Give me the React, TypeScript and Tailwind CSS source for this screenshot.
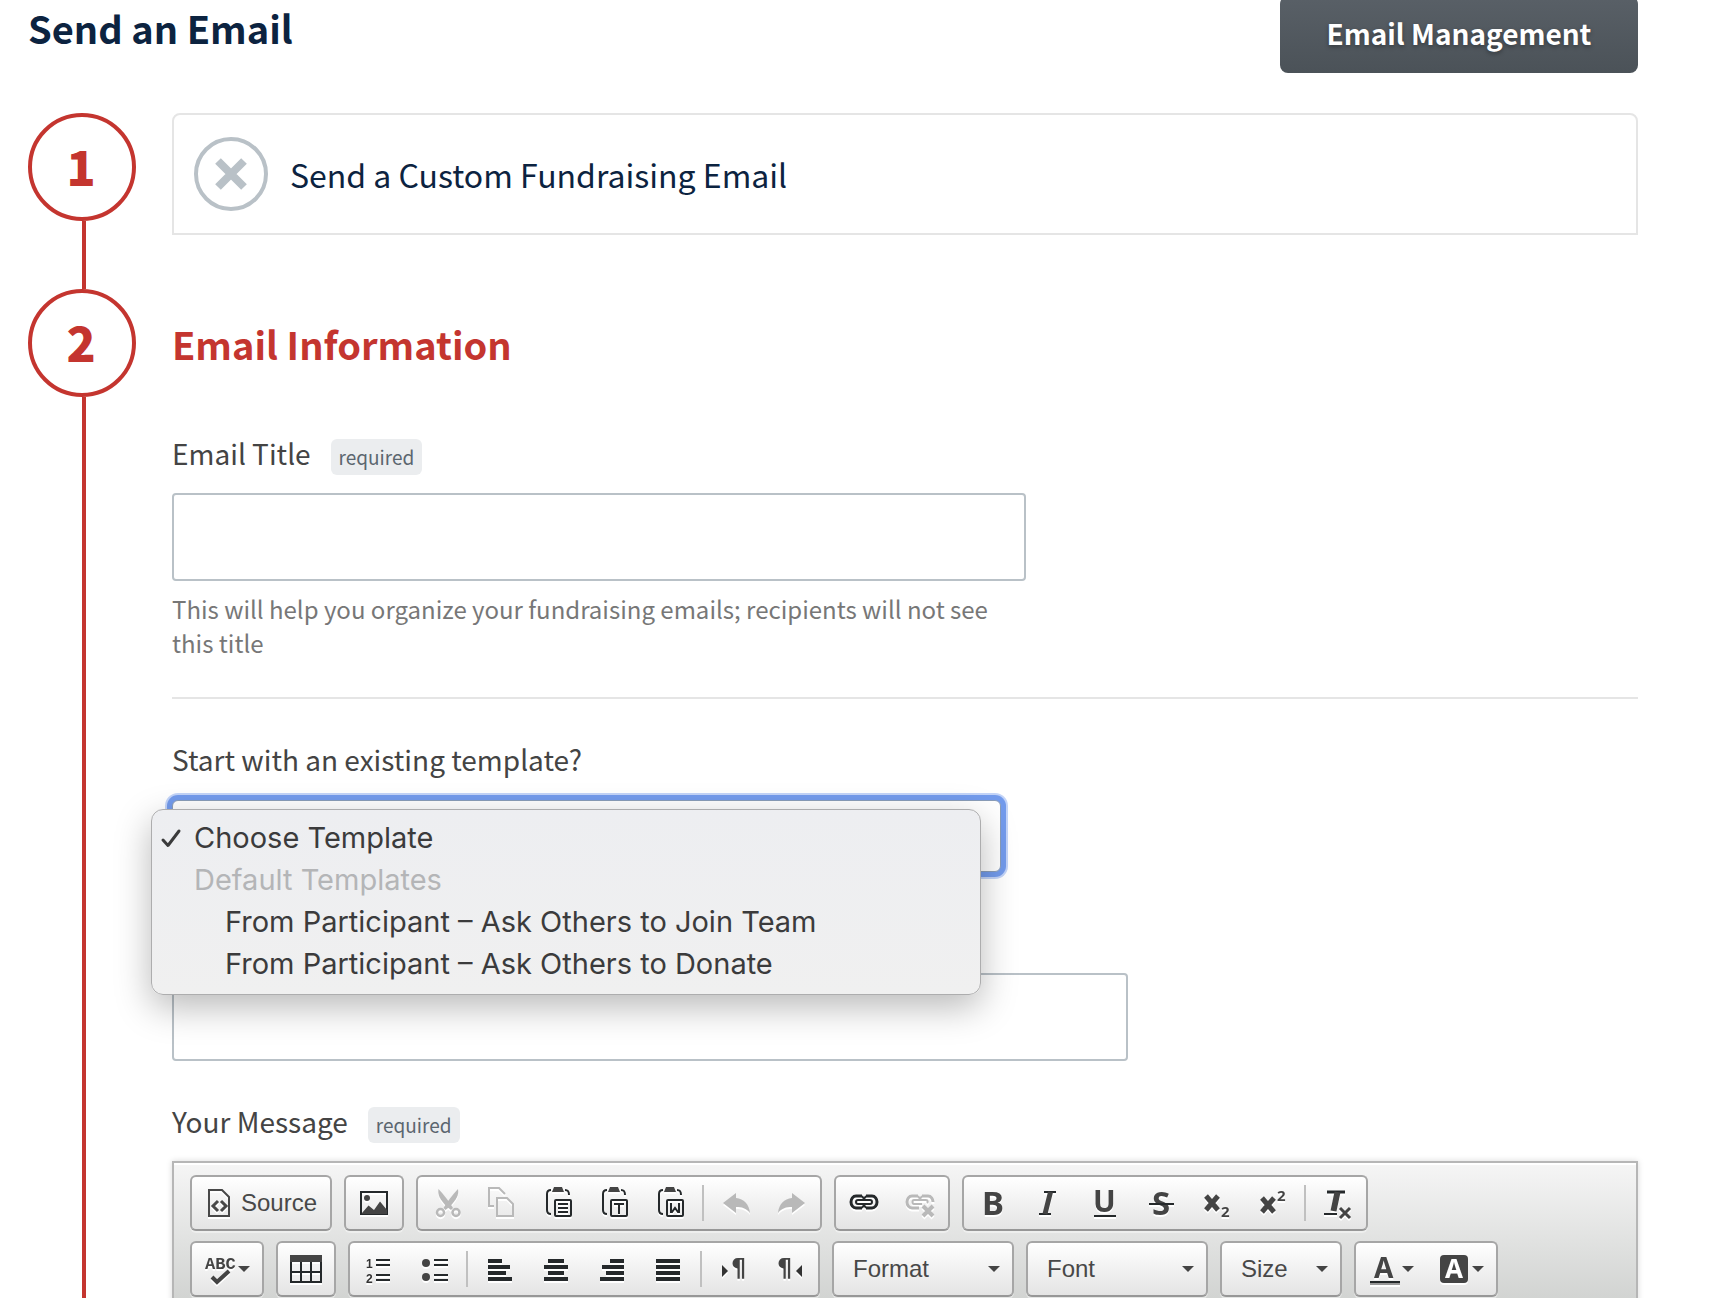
import { useState } from "react";
import type { ReactNode } from "react";

const templates = [
  "From Participant – Ask Others to Join Team",
  "From Participant – Ask Others to Donate",
];

function App() {
  return (
    <main className="h-screen overflow-hidden bg-white pl-7 pr-[78px] font-['Noto_Sans_CJK_SC',sans-serif] text-[#444]">
      <header className="flex items-start justify-between">
        <h1 className="text-[38px] font-bold leading-14 text-[#0c2340]">
          Send an Email
        </h1>
        <button className="-mt-1 h-[77px] w-[358px] rounded-lg bg-linear-to-b from-[#596067] to-[#4b5258] pb-1 text-[28px] font-bold text-white text-shadow-[0_2px_4px_rgb(0_0_0/0.35)]">
          Email Management
        </button>
      </header>

      <div className="mt-10">
        <Step number={1}>
          <div className="mb-[54px] flex h-[122px] items-center gap-[22px] rounded-t-lg border-2 border-[#e5e5e5] px-5">
            <button
              aria-label="Remove"
              className="flex size-[74px] items-center justify-center rounded-full border-4 border-[#b9c1c7]"
            >
              <svg width="36" height="36" viewBox="0 0 36 36" aria-hidden="true">
                <path d="M5 5L31 31M31 5L5 31" stroke="#b9c1c7" strokeWidth="8" />
              </svg>
            </button>
            <p className="text-[32px] leading-12 text-[#0c2340]">
              Send a Custom Fundraising Email
            </p>
          </div>
        </Step>

        <Step number={2}>
          <h2 className="flex h-[108px] items-center text-[38px] font-bold text-[#c4352f]">
            Email Information
          </h2>
          <div className="mt-[38px] border-b-2 border-[#e5e5e5] pb-[37px]">
            <FieldLabel htmlFor="title">Email Title</FieldLabel>
            <input
              id="title"
              type="text"
              className="mt-[18px] block h-[88px] w-full max-w-[854px] rounded border-2 border-[#b9c1c7] px-4 text-[28px]"
            />
            <p className="mt-[11px] max-w-[854px] text-[24px] leading-[34px] text-[#777]">
              This will help you organize your fundraising emails; recipients
              will not see this title
            </p>
          </div>

          <label
            htmlFor="template"
            className="mt-[42px] block text-[28px] leading-9"
          >
            Start with an existing template?
          </label>
          <TemplateSelect />

          <input
            type="text"
            aria-label="Subject"
            className="mt-[101px] block h-[88px] w-full max-w-[956px] rounded border-2 border-[#b9c1c7] px-4 text-[28px]"
          />

          <div className="mt-[42px] mb-[18px]">
            <FieldLabel htmlFor="message">Your Message</FieldLabel>
          </div>
          <Editor />
        </Step>
      </div>
    </main>
  );
}

// Numbered circle with the line that runs down to the next step
function Step({ number, children }: { number: number; children: ReactNode }) {
  return (
    <section className="flex gap-8">
      <div className="flex w-28 shrink-0 flex-col">
        <div className="flex size-[108px] shrink-0 items-center justify-center rounded-full border-4 border-[#c4352f] pr-[2px] pb-1 text-[48px] font-black text-[#c4352f]">
          {number}
        </div>
        <div className="mx-auto w-1 flex-1 bg-[#c4352f]" />
      </div>
      <div className="min-w-0 flex-1">{children}</div>
    </section>
  );
}

function FieldLabel({
  htmlFor,
  children,
}: {
  htmlFor: string;
  children: ReactNode;
}) {
  return (
    <label
      htmlFor={htmlFor}
      className="flex h-10 items-baseline gap-5 text-[28px] leading-9"
    >
      {children}
      <span className="rounded-md bg-[#ebedef] px-2 text-[19px] leading-9 text-[#5b666f]">
        required
      </span>
    </label>
  );
}

function TemplateSelect() {
  const [selected, setSelected] = useState("Choose Template");

  return (
    <div className="relative mt-[23px] max-w-[829px]">
      <select
        id="template"
        value={selected}
        onChange={(e) => setSelected(e.target.value)}
        className="block h-[72px] w-full appearance-none rounded-md border border-[#8a9db8] bg-white px-12 text-[24px] shadow-[0_0_0_5px_#739bec,0_0_0_7px_#c3d4f8] outline-none"
      >
        <option>Choose Template</option>
        <optgroup label="Default Templates">
          {templates.map((name) => (
            <option key={name}>{name}</option>
          ))}
        </optgroup>
      </select>

      <ul
        role="listbox"
        aria-label="Template"
        className="absolute top-[9px] right-5 -left-[21px] rounded-xl border border-[#adadae] bg-linear-to-b from-[#edeef1] to-[#f0f0f0] pt-[7px] pb-[9px] font-['Inter',sans-serif] text-[29px] leading-[42px] text-[#3b3b3c] shadow-[0_12px_36px_rgb(0_0_0/0.28)]"
      >
        <li
          role="option"
          aria-selected="true"
          className="flex items-center gap-3 pl-2"
        >
          <svg width="22" height="22" viewBox="0 0 22 22" fill="none" aria-hidden="true">
            <path
              d="M3 13L8 18.500L19 4"
              stroke="currentColor"
              strokeWidth="3"
              strokeLinecap="round"
              strokeLinejoin="round"
            />
          </svg>
          Choose Template
        </li>
        <li className="pl-[42px] text-[#b4b5b7]">Default Templates</li>
        {templates.map((name) => (
          <li
            key={name}
            role="option"
            aria-selected="false"
            className="pl-[73px]"
            onClick={() => setSelected(name)}
          >
            {name}
          </li>
        ))}
      </ul>
    </div>
  );
}

function Editor() {
  return (
    <div className="border-2 border-[#b6b6b6] shadow-[0_0_6px_rgb(0_0_0/0.15)]">
      <div className="flex flex-col gap-[10px] border-t-2 border-white bg-linear-to-b from-[#f5f5f5] to-[#cfd1cf] px-4 pt-[10px] pb-3">
        <div className="flex gap-3">
          <Group>
            <button className="flex h-[52px] w-[138px] items-center gap-[5px] pl-3 font-['Liberation_Sans',sans-serif] text-[24px] text-[#484848]">
              <Icon>
                <path d="M5 3H18L25 10V29H5Z" />
                <path d="M14 14L9 19L14 24M17 14L22 19L17 24" strokeWidth="3" />
              </Icon>
              Source
            </button>
          </Group>
          <Group>
            <Tool label="Image">
              <rect x="3" y="5" width="26" height="22" />
              <circle cx="9" cy="11" r="3" fill="#444" stroke="none" />
              <path d="M4 26L10.500 18.500L16 23L22 14.500L29 23V27H4Z" fill="#444" stroke="none" />
            </Tool>
          </Group>
          <Group>
            <Tool label="Cut" disabled>
              <path d="M8.500 2C7.500 8 10 12 16 19L21 23L23 21C19 14 14 8 8.500 2Z" fill="currentColor" stroke="none" />
              <path d="M28 2C29 8 26.500 12 20.500 19L15.500 23L13.500 21C17.500 14 22.500 8 28 2Z" fill="currentColor" stroke="none" />
              <circle cx="10.500" cy="25.500" r="3.500" strokeWidth="2.500" />
              <circle cx="26" cy="25.500" r="3.500" strokeWidth="2.500" />
            </Tool>
            <Tool label="Copy" disabled>
              <path d="M8 19H3V1H13L19 7" />
              <path d="M11 11H21L27 17V29H11Z" />
            </Tool>
            <Tool label="Paste">
              <Clipboard />
              <path d="M16 17H26M16 21H26M16 25H26" />
            </Tool>
            <Tool label="Paste as plain text">
              <Clipboard />
              <path d="M16 17H26M21 17V27" />
            </Tool>
            <Tool label="Paste from Word">
              <Clipboard />
              <path d="M17 16V25H18L21 21L24 25H25V16" />
            </Tool>
            <Separator />
            <Tool label="Undo" disabled>
              <path d="M3 16L16 6V11C24 12 29 17 30 26C26 21 22 20 16 20V26Z" fill="currentColor" stroke="none" />
            </Tool>
            <Tool label="Redo" disabled>
              <path d="M29 16L16 6V11C8 12 3 17 2 26C6 21 10 20 16 20V26Z" fill="currentColor" stroke="none" />
            </Tool>
          </Group>
          <Group>
            <Tool label="Link">
              <Chain />
            </Tool>
            <Tool label="Unlink" disabled>
              <path d="M14 9H8C5 9 3 12 3 15C3 18 5 21 8 21H15M18 9H24C27 9 29 12 29 15" strokeWidth="3" />
              <path d="M14 9L16 12L18 9M18 17H10C8 17 8 13 10 13H22C24 13 24 15 23 16" />
              <path d="M19 19L29 29M29 19L19 29" strokeWidth="4" />
            </Tool>
          </Group>
          <Group>
            <Tool label="Bold">
              <Glyph x={6} y={28} className="text-[33px]">B</Glyph>
            </Tool>
            <Tool label="Italic">
              <path d="M12 5H24M7 27H19" />
              <path d="M18.500 5L13 27" stroke="#444" strokeWidth="5" />
            </Tool>
            <Tool label="Underline">
              <Glyph x={5} y={25} className="text-[30px]">U</Glyph>
              <path d="M6 29H28" />
            </Tool>
            <Tool label="Strikethrough">
              <Glyph x={8} y={28} className="text-[33px]">S</Glyph>
              <path d="M5 17H30" />
            </Tool>
            <Tool label="Subscript">
              <path d="M6 9L18 23M18 9L6 23" stroke="#444" strokeWidth="5" />
              <Glyph x={21} y={30} className="text-[15px]">2</Glyph>
            </Tool>
            <Tool label="Superscript">
              <path d="M6 11L18 25M18 11L6 25" stroke="#444" strokeWidth="5" />
              <Glyph x={21} y={14} className="text-[15px]">2</Glyph>
            </Tool>
            <Separator />
            <Tool label="Remove format">
              <path d="M5 5H23" strokeWidth="3" />
              <path d="M15.500 5L11.500 24" stroke="#444" strokeWidth="6" />
              <path d="M2 27H15" />
              <path d="M18 21L28 31M28 21L18 31" stroke="#444" strokeWidth="3" />
            </Tool>
          </Group>
        </div>

        <div className="flex gap-3">
          <Group>
            <Tool label="Spell check" menu>
              <text x="1" y="16" fill="#444" stroke="none" className="font-['Liberation_Mono',monospace] text-[17px] font-bold">
                ABC
              </text>
              <path d="M8 24L13 29L25 18" stroke="#444" strokeWidth="4" />
            </Tool>
          </Group>
          <Group>
            <Tool label="Table">
              <rect x="1" y="3" width="30" height="26" />
              <path d="M0 2H32V9H0Z" fill="#444" stroke="none" />
              <path d="M11 9V30M21 9V30M1 19H31" />
            </Tool>
          </Group>
          <Group>
            <Tool label="Numbered list">
              <text x="4" y="15" fill="#333" stroke="none" className="font-['Liberation_Sans',sans-serif] text-[12px] font-bold">
                1
              </text>
              <text x="4" y="30" fill="#333" stroke="none" className="font-['Liberation_Sans',sans-serif] text-[12px] font-bold">
                2
              </text>
              <path d="M14 7H28M14 12H28M14 22H28M14 27H28" />
            </Tool>
            <Tool label="Bulleted list">
              <circle cx="8" cy="10" r="4" fill="#444" stroke="none" />
              <circle cx="8" cy="24" r="4" fill="#444" stroke="none" />
              <path d="M16 7H30M16 12H30M16 22H30M16 27H30" />
            </Tool>
            <Separator />
            <Tool label="Align left">
              <path d="M4 8H18M4 14H26M4 20H22M4 26H28" strokeWidth="4" />
            </Tool>
            <Tool label="Center">
              <path d="M8 8H24M4 14H28M8 20H24M4 26H28" strokeWidth="4" />
            </Tool>
            <Tool label="Align right">
              <path d="M14 8H28M6 14H28M10 20H28M4 26H28" strokeWidth="4" />
            </Tool>
            <Tool label="Justify">
              <path d="M4 8H28M4 14H28M4 20H28M4 26H28" strokeWidth="4" />
            </Tool>
            <Separator />
            <Tool label="Left to right">
              <path d="M4 12L10 18L4 24Z" fill="#333" stroke="none" />
              <Pilcrow x={13} />
            </Tool>
            <Tool label="Right to left">
              <Pilcrow x={3} />
              <path d="M28 12L22 18L28 24Z" fill="#333" stroke="none" />
            </Tool>
          </Group>
          <Combo label="Format" className="w-[178px]" />
          <Combo label="Font" className="w-[178px]" />
          <Combo label="Size" className="w-[118px]" />
          <Group>
            <Tool label="Text color" menu>
              <Glyph x={6} y={25} className="text-[28px]">A</Glyph>
              <path d="M2 29H32" />
              <path d="M2 31H32" stroke="#999" />
            </Tool>
            <Tool label="Background color" menu>
              <rect x="2" y="2" width="28" height="28" rx="4" fill="#444" stroke="none" />
              <text x="7" y="25" fill="#fff" stroke="none" className="font-['Noto_Sans',sans-serif] text-[26px] font-bold">
                A
              </text>
            </Tool>
          </Group>
        </div>
      </div>
      <textarea id="message" className="block h-80 w-full resize-none p-5" />
    </div>
  );
}

function Group({ children }: { children: ReactNode }) {
  return (
    <div className="flex items-center rounded-md border-2 border-[#a6a6a6] border-b-[#979797] bg-linear-to-b from-white to-[#e4e4e4] shadow-[0_2px_0_rgb(255_255_255/0.4)]">
      {children}
    </div>
  );
}

function Separator() {
  return <div className="mx-1 h-9 w-[2px] bg-[#c0c0c0]" />;
}

function Icon({ children }: { children: ReactNode }) {
  return (
    <svg
      width="32"
      height="32"
      viewBox="0 0 32 32"
      fill="none"
      stroke="currentColor"
      strokeWidth="2"
      className="shrink-0 overflow-visible drop-shadow-[0_2px_0_#fff]"
      aria-hidden="true"
    >
      {children}
    </svg>
  );
}

function Tool({
  label,
  disabled,
  menu,
  children,
}: {
  label: string;
  disabled?: boolean;
  menu?: boolean;
  children: ReactNode;
}) {
  return (
    <button
      aria-label={label}
      disabled={disabled}
      className="flex h-[52px] items-center gap-[2px] px-3 text-[#25292b] disabled:text-[#b9b9b9]"
    >
      <Icon>{children}</Icon>
      {menu && <Arrow />}
    </button>
  );
}

function Combo({ label, className }: { label: string; className: string }) {
  return (
    <Group>
      <button
        className={`flex h-[52px] items-center justify-between pr-3 pl-[19px] font-['Liberation_Sans',sans-serif] text-[24px] text-[#484848] ${className}`}
      >
        {label}
        <Arrow />
      </button>
    </Group>
  );
}

function Arrow() {
  return (
    <svg width="12" height="6" viewBox="0 0 12 6" aria-hidden="true">
      <path d="M0 0H12L6 6Z" fill="#444" />
    </svg>
  );
}

function Glyph({
  x,
  y,
  className,
  children,
}: {
  x: number;
  y: number;
  className: string;
  children: ReactNode;
}) {
  return (
    <text
      x={x}
      y={y}
      fill="#444"
      stroke="none"
      className={`font-['Noto_Sans',sans-serif] font-bold ${className}`}
    >
      {children}
    </text>
  );
}

function Clipboard() {
  return (
    <>
      <path d="M9 3C6 3 5 4 5 7V23C5 26 6 27 9 27M23 3C26 3 27 4 27 8" />
      <path d="M12 0H20L22 5H10Z" fill="#444" stroke="none" />
      <rect x="13" y="13" width="16" height="16" rx="1" />
    </>
  );
}

function Chain() {
  return (
    <>
      <path d="M14 9H8C5 9 3 12 3 15C3 18 5 21 8 21H14M18 9H24C27 9 29 12 29 15C29 18 27 21 24 21H18" strokeWidth="3" />
      <path d="M14 9L16 12L18 9M14 21L16 18L18 21" />
      <rect x="8" y="13" width="16" height="4" rx="2" />
    </>
  );
}

function Pilcrow({ x }: { x: number }) {
  return (
    <text
      x={x}
      y="23"
      fill="#444"
      stroke="none"
      className="font-['DejaVu_Sans',sans-serif] text-[24px] font-bold"
    >
      ¶
    </text>
  );
}

export default App;
